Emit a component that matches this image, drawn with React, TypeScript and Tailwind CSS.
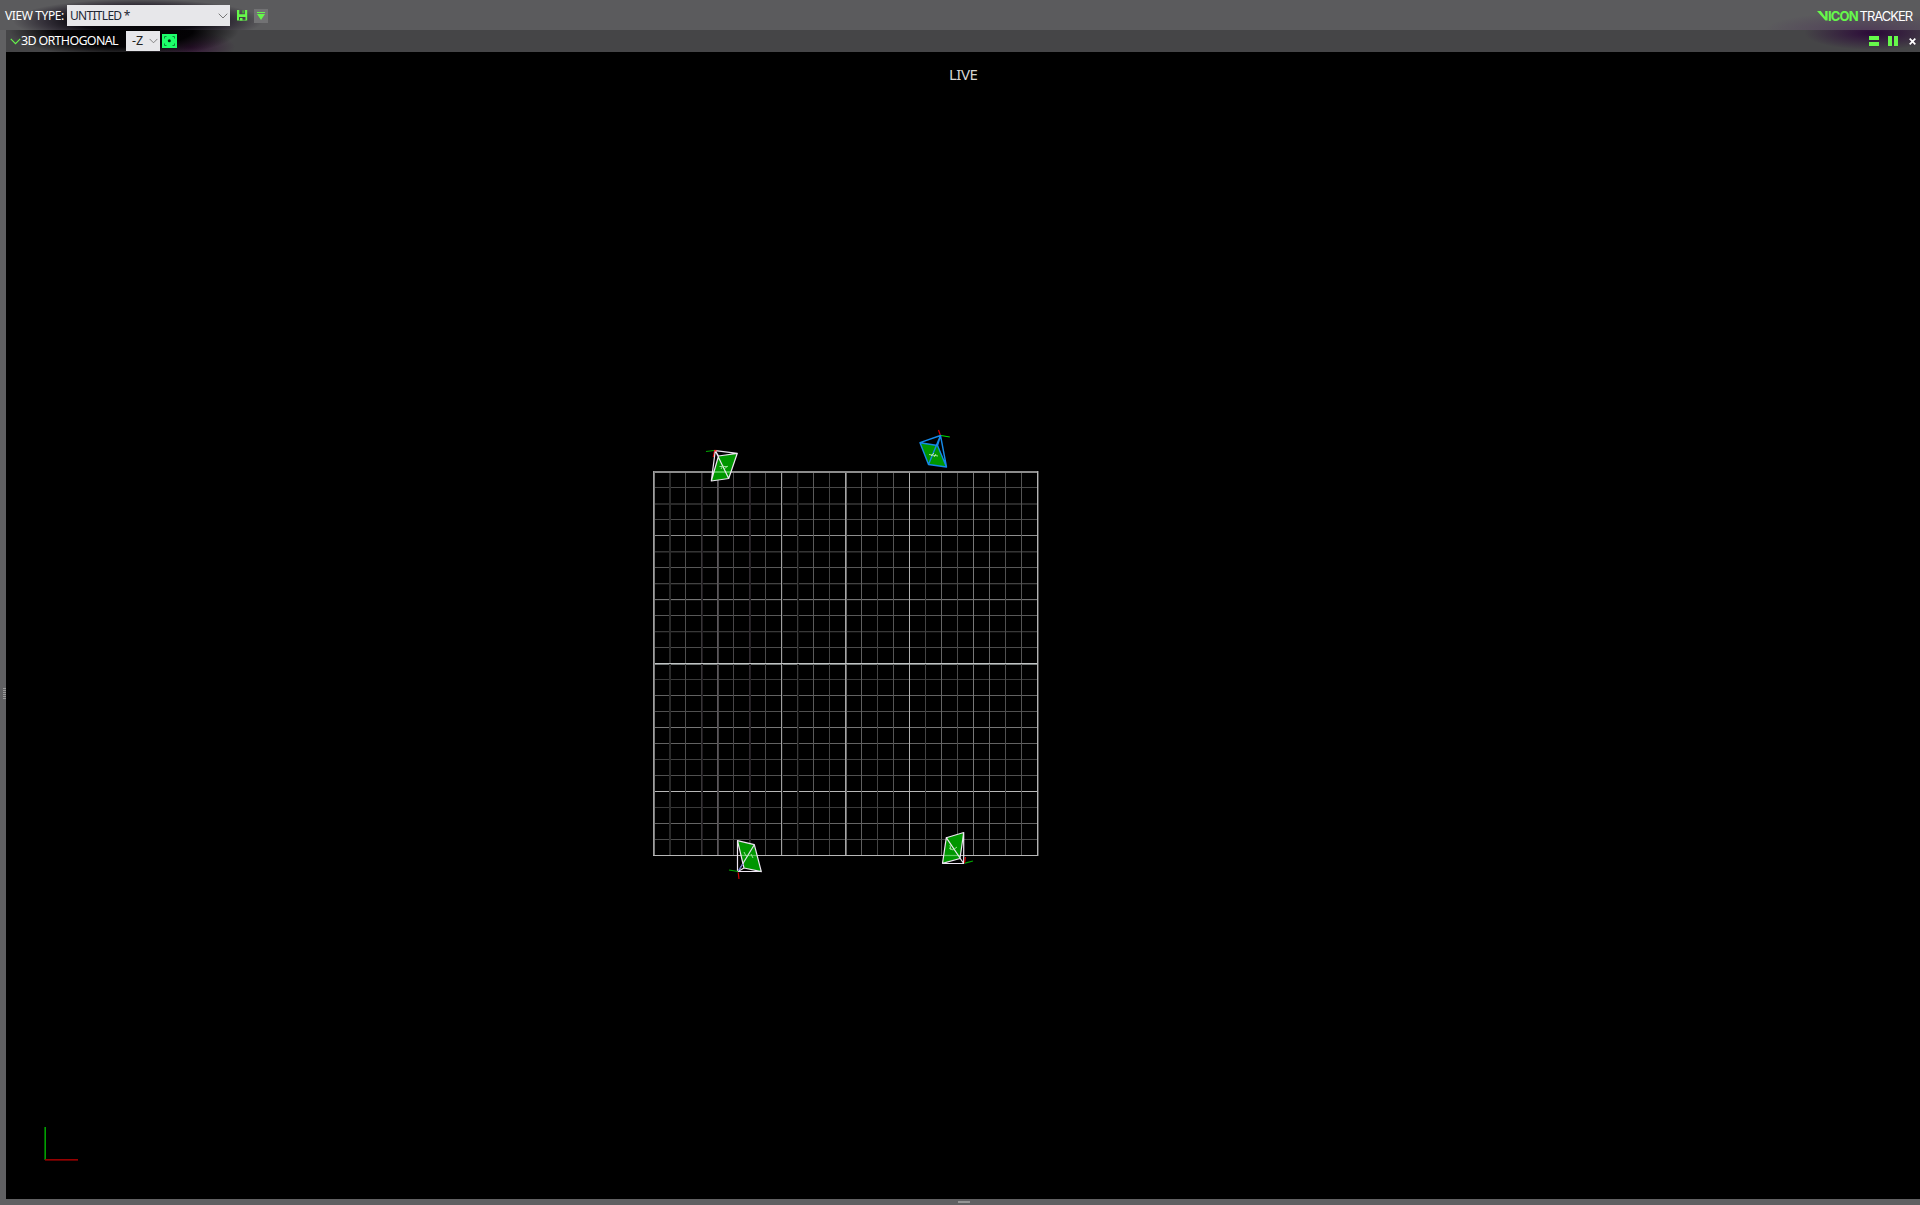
import React from "react";

type GridLine = [number, string, string?];

const verticals: GridLine[] = [
  [669, "#2a2a2a", "#2a2a2a"], [685, "#4e4e4e"], [701, "#383638", "#201c20"], [717, "#5c585c", "#474547"],
  [733, "#484648"], [749, "#302a30", "#242024"], [765, "#4a4a4a"], [781, "#a0a0a0", "#181818"],
  [797, "#3a3a3a", "#101010"], [813, "#5a5a5a"], [829, "#444444"], [845, "#a6a6a6", "#6a6a6a"],
  [861, "#606060"], [877, "#444444"], [893, "#555555"], [909, "#b0b0b0"], [925, "#444444"],
  [941, "#666666"], [957, "#4a4a4a"], [973, "#777777"], [989, "#666666"], [1005, "#505050"], [1021, "#555555"],
];

const horizontals: GridLine[] = [
  [487, "#484848"], [503, "#292929", "#292929"], [519, "#4a4a4a"], [535, "#8e8e8e"],
  [551, "#343434", "#1c1c1c"], [567, "#585858"], [583, "#424242", "#141414"], [599, "#747474", "#121212"],
  [615, "#585858"], [631, "#383838", "#101010"], [647, "#4c4c4c"], [663, "#c0c4c4", "#747878"],
  [679, "#3a3a3a"], [695, "#626262"], [711, "#505050"], [727, "#777777"], [743, "#626262"],
  [759, "#404040"], [775, "#505050"], [791, "#b8b8b8"], [807, "#3a3a3a"], [823, "#646464"], [839, "#4a4a4a"],
];

function FloorGrid() {
  return (
    <g shapeRendering="crispEdges">
      {horizontals.map(([y, a, b]) => (
        <g key={y}>
          <rect x={654} y={y} width={384} height={1} fill={a} />
          {b && <rect x={654} y={y + 1} width={384} height={1} fill={b} />}
        </g>
      ))}
      {verticals.map(([x, a, b]) => (
        <g key={x}>
          <rect x={x} y={472} width={1} height={384} fill={a} />
          {b && <rect x={x + 1} y={472} width={1} height={384} fill={b} />}
        </g>
      ))}
      <rect x={653} y={663} width={385} height={1} fill="#c0c4c4" />
      <rect x={653} y={471} width={385} height={1} fill="#8c8c8c" />
      <rect x={653} y={472} width={385} height={1} fill="#8c8c8c" />
      <rect x={653} y={471} width={1} height={385} fill="#a0a0a0" />
      <rect x={654} y={472} width={1} height={384} fill="#7c7c7c" />
      <rect x={653} y={855} width={386} height={1} fill="#b8b8b8" />
      <rect x={1037} y={471} width={1} height={385} fill="#b4b4b4" />
      <rect x={1038} y={471} width={1} height={385} fill="#4c4c4c" />
    </g>
  );
}

function Cameras() {
  return (
    <g fill="none" strokeWidth="1.2" strokeLinejoin="round">
      {/* top left */}
      <path d="M718.5 456L737.3 453.5L728.7 478.5L711.3 481Z" fill="#009600" />
      <path d="M712 472H731" stroke="#4ec84e" strokeWidth="2" />
      <path d="M706 451.5L714 450.5" stroke="#00a800" />
      <path d="M714.5 451L713.3 457" stroke="#e00000" />
      <path d="M715.3 450.7L737.3 453.3L718.5 456L711.3 481L728.7 478.5L737.3 453.3M718.5 456L715.3 450.7L711.3 481M715.3 450.7L728.7 478.5" stroke="#eee6f2" />
      <path d="M719.5 466.5L727 466.5M721 469L723 465.5M724 469L728 466" stroke="#a8e8a8" strokeWidth="0.9" />
      <path d="M714 450.7h2.5" stroke="#f03030" strokeWidth="1.6" />
      {/* selected, top right */}
      <path d="M920 443L938 445.5L946.5 467L928.5 464.5Z" fill="#009600" />
      <path d="M938.5 430L940.3 435" stroke="#d80000" />
      <path d="M941 435.5L949.8 437" stroke="#00e000" />
      <path d="M920 442.7L940.5 435.5L937.5 445.5L946.5 467L928.5 464.5L920 442.7L937.5 445.5M940.5 435.5L946.5 467M940.5 435.5L928.5 464.5" stroke="#1689e8" strokeWidth="1.4" />
      <path d="M929 454.5L938 456M931 456L934 453M934 457L936 454" stroke="#b8eea8" strokeWidth="0.9" />
      {/* bottom left */}
      <path d="M737.5 841L754 844.5L761.3 871.5L744 868Z" fill="#009600" />
      <path d="M741 855.5H757" stroke="#58c858" />
      <path d="M737.5 840.7L754.3 844.7L761.3 871.7L744 868L737.5 840.7V871.5H761.3M744 868L737.5 871.7" stroke="#eee6f2" />
      <path d="M739 870L754.3 844.7" stroke="#e6def0" />
      <path d="M738 871L743 864" stroke="#5a62b8" />
      <path d="M744 852L746 856L749 855M751 854L753 858" stroke="#a8e8a8" strokeWidth="0.9" />
      <path d="M729 870L738 871.5" stroke="#00a800" />
      <path d="M738.2 872.5L739 879" stroke="#c80000" />
      {/* bottom right */}
      <path d="M946.5 837.5L963.8 832.5L960 858.5L942.5 863.3Z" fill="#009600" />
      <path d="M944 855.5H961" stroke="#62cc62" />
      <path d="M946.3 837.7L963.7 832.5L960 858.5L942.5 863.4L946.3 837.7L963.7 863.5H942.5M963.7 832.5V863.5" stroke="#eee6f2" />
      <path d="M949 848L953 850L957 847M950 845L951 850" stroke="#a8e8a8" strokeWidth="0.9" />
      <path d="M965 863.2L973 861" stroke="#00a800" />
      <path d="M964.5 863L965.5 857" stroke="#e00000" />
    </g>
  );
}

function Chevron({ className = "" }: { className?: string }) {
  return (
    <svg className={className} width="10" height="6" viewBox="0 0 10 6" fill="none" stroke="currentColor">
      <path d="M.7 .7L5 5L9.3 .7" />
    </svg>
  );
}

function TopBar() {
  return (
    <header className="flex h-[30px] shrink-0 items-center bg-[#5b5b5d] bg-[radial-gradient(ellipse_125px_22px_at_138px_21px,#000_0%,#0b0910_50%,#332f38_75%,transparent_100%),radial-gradient(ellipse_100px_18px_at_1865px_30px,#503d58_0%,transparent_100%)] pt-px">
      <span className="ml-[5px] w-[62px] whitespace-nowrap text-[12px] leading-4 tracking-[-0.4px] text-white">VIEW TYPE:</span>
      <div className="flex h-[21px] w-[163px] items-center justify-between bg-[#e7e7ea] pl-[3px] pr-[2px] text-[12px] text-[#1d2632]">
        <span className="whitespace-nowrap tracking-[-0.7px]">UNTITLED *</span>
        <Chevron className="text-[#777]" />
      </div>
      <svg className="ml-[7px]" width="11" height="11" viewBox="0 0 11 11">
        <path d="M0 0H2.3V4.2H7.9V0H10.2V10.5H8.5V7H2V10.5H0ZM3 8H5.5V10.5H3Z" fill="#66f84b" />
        <path d="M2 9.8H9V10.5H2Z" fill="#66f84b" />
        <path d="M5.2 0.3H7V3.2H5.2Z" fill="#45a838" />
      </svg>
      <div className="ml-[6px] flex size-[14px] items-center justify-center bg-[#727274]">
        <svg width="8" height="8" viewBox="0 0 8 8" fill="#66f84b">
          <path d="M0 0H8V1H0ZM0 2H8L4 8Z" />
        </svg>
      </div>
      <div className="ml-auto flex w-[103px] items-center whitespace-nowrap font-[Inter,sans-serif] text-[13px] leading-[20px]">
        <svg className="mt-px shrink-0" width="11" height="10" viewBox="0 0 11 10">
          <path d="M0 0H3.8L8.2 6V0H10.6V9.5H8.4Z" fill="#66f84b" />
        </svg>
        <span className="w-[31.5px] shrink-0 font-bold tracking-[-0.85px] text-[#66f84b]">ICON</span>
        <span className="tracking-[-1px] text-white">TRACKER</span>
      </div>
    </header>
  );
}

function PaneHeader() {
  return (
    <div className="flex h-[22px] shrink-0 items-center bg-[#454547] bg-[radial-gradient(ellipse_115px_28px_at_118px_0px,#000_0%,#030204_60%,transparent_100%),radial-gradient(ellipse_45px_16px_at_184px_17px,#321334_0%,transparent_100%),radial-gradient(ellipse_70px_17px_at_1868px_3px,#2b0838_0%,transparent_100%)]">
      <Chevron className="ml-1 h-[7px] w-[11px] text-[#66f84b]" />
      <span className="mt-px w-[105px] whitespace-nowrap text-[12.5px] tracking-[-0.7px] text-white">3D ORTHOGONAL</span>
      <div className="flex h-[20px] w-[34px] items-center justify-between bg-[#e7e7ea] pl-[6px] pr-[2px] text-[12.5px] text-[#222]">
        <span>-Z</span>
        <Chevron className="h-[6px] w-[9px] text-[#777]" />
      </div>
      <svg className="ml-[2px]" width="15" height="14" viewBox="0 0 15 14">
        <path d="M0 0H15V14H0Z" fill="#1dff6a" />
        <path d="M2.5 4.5V2.5H4.5M10.5 2.5H12.5V4.5M12.5 9.5V11.5H10.5M4.5 11.5H2.5V9.5" fill="none" stroke="#0b7a33" strokeWidth="0.9" />
        <circle cx="7.3" cy="6.8" r="1.5" fill="#002a10" />
      </svg>
      <div className="ml-auto mr-[4px] flex items-center">
        <svg width="10" height="10" viewBox="0 0 10 10" fill="#66f84b" className="mr-[9px]">
          <path d="M0 0H10V4H0ZM0 6H10V10H0Z" />
        </svg>
        <svg width="10" height="10" viewBox="0 0 10 10" fill="#66f84b" className="mr-[11px]">
          <path d="M0 0H4V10H0ZM6 0H10V10H6Z" />
        </svg>
        <svg width="7" height="7" viewBox="0 0 7 7" fill="none" stroke="#fff" strokeWidth="1.7">
          <path d="M.7 .7L6.3 6.3M6.3 .7L.7 6.3" />
        </svg>
      </div>
    </div>
  );
}

function Viewport() {
  return (
    <main className="relative h-[1147px] w-[1914px] bg-black">
      <svg className="block" width="1914" height="1147" viewBox="6 52 1914 1147">
        <FloorGrid />
        <Cameras />
        <g shapeRendering="crispEdges">
          <rect x={44} y={1127} width={1} height={33} fill="#006000" />
          <rect x={45} y={1127} width={1} height={33} fill="#00a000" />
          <rect x={45} y={1159} width={33} height={1} fill="#960000" />
          <rect x={45} y={1160} width={33} height={1} fill="#600000" />
        </g>
      </svg>
      <span className="absolute left-[943px] top-[12px] text-[15px] leading-5 tracking-[-0.5px] text-[#d6d6d2]">LIVE</span>
    </main>
  );
}

export default function App() {
  return (
    <div className="flex h-[1205px] w-[1920px] flex-col overflow-hidden bg-[#606062] font-['Noto_Sans','Open_Sans',sans-serif]">
      <TopBar />
      <div className="flex">
        <div className="flex w-[6px] shrink-0 flex-col items-end pt-[658px]">
          <div className="flex flex-col gap-px">
            {[0, 1, 2, 3, 4, 5].map((i) => (
              <div key={i} className="h-px w-[3px] bg-[#999]" />
            ))}
          </div>
        </div>
        <div className="flex w-[1914px] flex-col">
          <PaneHeader />
          <Viewport />
        </div>
      </div>
      <div className="flex h-[6px] items-center justify-center pl-[8px]">
        <div className="h-[2px] w-[12px] bg-[#959595]" />
      </div>
    </div>
  );
}
